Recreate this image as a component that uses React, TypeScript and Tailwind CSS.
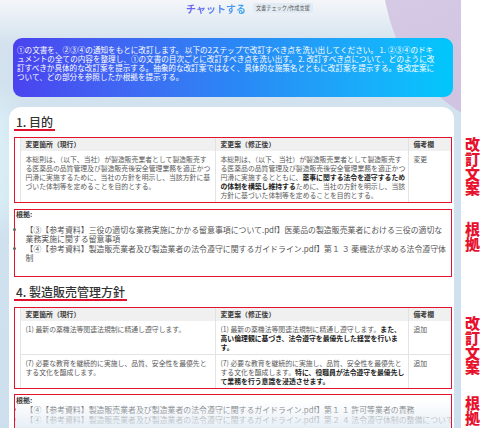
import type { ReactNode } from 'react';

interface Row {
  current: ReactNode[];
  revised: ReactNode[];
  note: string;
}

const B = ({ children }: { children: ReactNode }) => (
  <b className="font-bold text-[#222]">{children}</b>
);

const purposeRows: Row[] = [
  {
    current: [
      '本総則は、（以下、当社）が製造販売業者として製造販売す',
      'る医薬品の品質管理及び製造販売後安全管理業務を適正かつ',
      '円滑に実施するために、当社の方針を明示し、当該方針に基',
      'づいた体制等を定めることを目的とする。',
    ],
    revised: [
      '本総則は、（以下、当社）が製造販売業者として製造販売す',
      'る医薬品の品質管理及び製造販売後安全管理業務を適正かつ',
      <>円滑に実施するとともに、<B>薬事に関する法令を遵守するため</B></>,
      <><B>の体制を構築し維持する</B>ために、当社の方針を明示し、当該</>,
      '方針に基づいた体制等を定めることを目的とする。',
    ],
    note: '変更',
  },
];

const policyRows: Row[] = [
  {
    current: ['(1) 最新の薬機法等関連法規制に精通し遵守します。'],
    revised: [
      <>(1) 最新の薬機法等関連法規制に精通し遵守します。<B>また、</B></>,
      <B>高い倫理観に基づき、法令遵守を最優先した経営を行いま</B>,
      <B>す。</B>,
    ],
    note: '追加',
  },
  {
    current: [
      '(7) 必要な教育を継続的に実施し、品質、安全性を最優先と',
      'する文化を醸成します。',
    ],
    revised: [
      '(7) 必要な教育を継続的に実施し、品質、安全性を最優先と',
      <>する文化を醸成します。<B>特に、役職員が法令遵守を最優先し</B></>,
      <B>て業務を行う意識を浸透させます。</B>,
    ],
    note: '追加',
  },
];

function Lines({ lines }: { lines: ReactNode[] }) {
  return (
    <>
      {lines.map((l, i) => (
        <span key={i} className="block whitespace-nowrap">{l}</span>
      ))}
    </>
  );
}

function RevisionTable({ rows }: { rows: Row[] }) {
  return (
    <div className="border-[1.5px] border-[#e3122f] pl-[4.5px]">
      <div className="grid grid-cols-[194px_193px_43px] border-l border-[#e4e4e4] text-[6.85px] leading-[9px] text-[#5a5a5a]">
        <div className="h-[13px] bg-[#f0f0f0] px-[5px] py-[2px] font-bold text-[#3a3a3a]">変更箇所（現行）</div>
        <div className="h-[13px] bg-[#f0f0f0] border-l border-[#e2e2e2] px-[5px] py-[2px] font-bold text-[#3a3a3a]">変更案（修正後）</div>
        <div className="h-[13px] bg-[#f0f0f0] border-l border-[#e2e2e2] px-[5px] py-[2px] font-bold text-[#3a3a3a]">備考欄</div>
        {rows.map((row, i) => (
          <div key={i} className="contents">
            <div className={`px-[5px] pt-[3.5px] pb-[2.5px] ${i > 0 ? 'border-t border-[#e4e4e4]' : ''}`}>
              <Lines lines={row.current} />
            </div>
            <div className={`border-l border-[#e4e4e4] px-[5px] pt-[3.5px] pb-[2.5px] ${i > 0 ? 'border-t' : ''}`}>
              <Lines lines={row.revised} />
            </div>
            <div className={`border-l border-[#e4e4e4] px-[5px] pt-[3.5px] pb-[2.5px] ${i > 0 ? 'border-t' : ''}`}>
              {row.note}
            </div>
          </div>
        ))}
      </div>
    </div>
  );
}

function SectionTitle({ children }: { children: ReactNode }) {
  return (
    <div className="flex pl-[5px]">
      <h2 className="border-b-2 border-[#e3122f] px-[2px] text-[12px] leading-[14px] font-medium text-[#333]">
        {children}
      </h2>
    </div>
  );
}

export default function App() {
  return (
    <div className="flex w-[500px] h-[444px] overflow-hidden bg-white font-['Noto_Sans_CJK_JP','Noto_Sans',sans-serif]">
      <div className="relative w-[461px] h-[428px] shrink-0 overflow-hidden bg-[linear-gradient(180deg,#f4f6f9_0px,#d3e2ee_44px,#cddfee_100%)]">
        {/* decorative blobs */}
        <div className="absolute left-[383px] top-[-188px] w-[324px] h-[324px] rounded-full bg-[linear-gradient(160deg,#dcd0e8,#cbbfdf)]" />
        <div className="absolute left-[-50px] top-[95px] w-[64px] h-[130px] rounded-full bg-[#daeff7] blur-md" />

        <div className="relative flex flex-col">
          {/* header */}
          <div className="flex h-[38px] items-start gap-[7px] pl-[186px] pt-[3px]">
            <span className="bg-gradient-to-r from-[#6a5cf2] to-[#3aa8ee] bg-clip-text text-[10px] leading-[11px] font-bold text-transparent">
              チャットする
            </span>
            <span className="rounded-[2px] bg-[#e2ebf4] px-[3px] text-[5.2px] leading-[10px] text-[#555]">
              文書チェック/作成支援
            </span>
          </div>

          {/* instruction banner */}
          <div className="ml-[13px] mr-[8px] h-[59px] rounded-[9px] bg-gradient-to-r from-[#4a42ef] via-[#2a86f5] to-[#00c7fc] pl-[4px] pt-[7px]">
            <p className="whitespace-nowrap text-[7.6px] leading-[9px] text-white">
              ①の文書を、②③④の通知をもとに改訂します。 以下の2ステップで改訂すべき点を洗い出してください。 1. ②③④のドキ<br />
              ュメントの全ての内容を整理し、①の文書の目次ごとに改訂すべき点を洗い出す。 2. 改訂すべき点について、どのように改<br />
              訂すべきか具体的な改訂案を提示する。抽象的な改訂案ではなく、具体的な施策名とともに改訂案を提示する。各改定案に<br />
              ついて、どの部分を参照したか根拠を提示する。
            </p>
          </div>

          {/* result card */}
          <div className="ml-[9px] mr-[7px] mt-[10px] h-[340px] rounded-t-[12px] bg-white pt-[8px]">
            <SectionTitle>1. 目的</SectionTitle>

            <div className="ml-[5px] mr-[2px] mt-[6px]">
              <RevisionTable rows={purposeRows} />
            </div>

            <div className="ml-[5px] mr-[2px] mt-[6px] h-[68px] border-[1.5px] border-[#e3122f] pl-[1px]">
              <p className="text-[7px] leading-[9px] font-bold text-[#333]">根拠:</p>
              <ul className="mt-[5.5px] list-disc pl-[9.5px] text-[7.9px] leading-[9.5px] text-[#555] marker:text-[#666]">
                <li>
                  <span className="block whitespace-nowrap">【③【参考資料】三役の適切な業務実施にかかる留意事項について.pdf】医薬品の製造販売業者における三役の適切な</span>
                  <span className="block whitespace-nowrap">業務実施に関する留意事項</span>
                </li>
                <li>
                  <span className="block whitespace-nowrap">【④【参考資料】製造販売業者及び製造業者の法令遵守に関するガイドライン.pdf】第１ ３ 薬機法が求める法令遵守体</span>
                  <span className="block whitespace-nowrap">制</span>
                </li>
              </ul>
            </div>

            <div className="mt-[8px]">
              <SectionTitle>4. 製造販売管理方針</SectionTitle>
            </div>

            <div className="ml-[5px] mr-[2px] mt-[6px]">
              <RevisionTable rows={policyRows} />
            </div>

            <div className="relative ml-[5px] mr-[2px] mt-[5px] h-[37px] overflow-hidden border-[1.5px] border-[#e3122f] pl-[1px]">
              <p className="pt-[1px] text-[7px] leading-[9px] font-bold text-[#333]">根拠:</p>
              <ul className="list-disc pl-[9.5px] text-[7.9px] leading-[9.5px] text-[#555] marker:text-[#666]">
                <li className="whitespace-nowrap">【④【参考資料】製造販売業者及び製造業者の法令遵守に関するガイドライン.pdf】第１ １ 許可等業者の責務</li>
                <li className="whitespace-nowrap">【④【参考資料】製造販売業者及び製造業者の法令遵守に関するガイドライン.pdf】第２ ４ 法令遵守体制の整備について</li>
              </ul>
              {/* fade over the cut-off content */}
              <div className="absolute inset-x-0 bottom-0 h-[30px] bg-gradient-to-b from-[#eef3f8]/0 via-[#eaf1f7]/60 to-[#e2ecf5]/95" />
            </div>
          </div>
        </div>
      </div>

      {/* annotations */}
      <aside className="flex flex-1 flex-col items-start pl-[4px] text-[15px] leading-[15px] font-extrabold text-[#e8112d]">
        <div className="mt-[137px] h-[59px] [writing-mode:vertical-rl] tracking-[-0.3px]">改訂文案</div>
        <div className="mt-[26px] h-[30px] [writing-mode:vertical-rl] tracking-[-0.3px]">根拠</div>
        <div className="mt-[64px] h-[59px] [writing-mode:vertical-rl] tracking-[-0.3px]">改訂文案</div>
        <div className="mt-[21px] h-[30px] [writing-mode:vertical-rl] tracking-[-0.3px]">根拠</div>
      </aside>
    </div>
  );
}
